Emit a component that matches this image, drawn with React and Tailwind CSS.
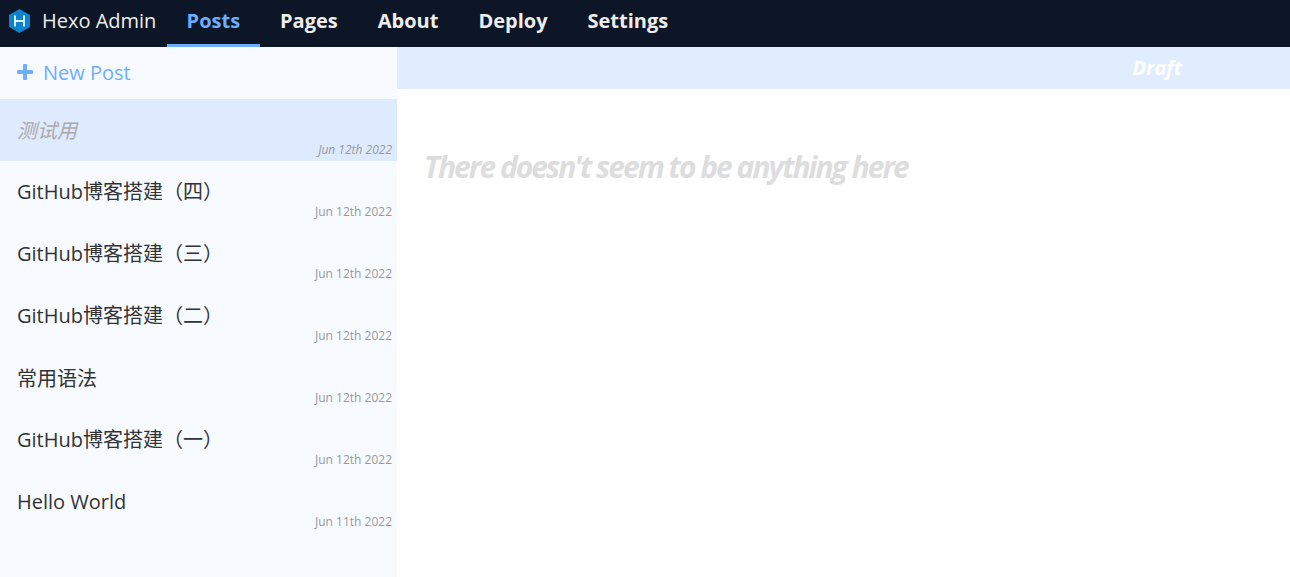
import React from 'react';

const tabs = ['Posts', 'Pages', 'About', 'Deploy', 'Settings'];

const posts = [
  { title: '测试用', date: 'Jun 12th 2022', draft: true },
  { title: 'GitHub博客搭建（四）', date: 'Jun 12th 2022' },
  { title: 'GitHub博客搭建（三）', date: 'Jun 12th 2022' },
  { title: 'GitHub博客搭建（二）', date: 'Jun 12th 2022' },
  { title: '常用语法', date: 'Jun 12th 2022' },
  { title: 'GitHub博客搭建（一）', date: 'Jun 12th 2022' },
  { title: 'Hello World', date: 'Jun 11th 2022' },
];

function Logo() {
  return (
    <svg className="-mt-px ml-[9px] mr-3 h-6 w-[21px] shrink-0" viewBox="0 0 21 24">
      <path d="M10.5 0 21 6v12l-10.5 6L0 18V6z" fill="#0e83cd" />
      <path d="M6 6.5v11M15 6.5v11M6 12h9" stroke="#e8f6ff" strokeWidth="1.8" fill="none" />
    </svg>
  );
}

function PlusIcon() {
  return (
    <svg className="-mt-0.5 mr-2.5 size-4" viewBox="0 0 16 16" fill="currentColor">
      <path d="M7 0h2a1 1 0 0 1 1 1v5h5a1 1 0 0 1 1 1v2a1 1 0 0 1-1 1h-5v5a1 1 0 0 1-1 1H7a1 1 0 0 1-1-1v-5H1a1 1 0 0 1-1-1V7a1 1 0 0 1 1-1h5V1a1 1 0 0 1 1-1z" />
    </svg>
  );
}

function Header() {
  return (
    <header className="flex h-[47px] bg-[#0d1626] text-xl text-[#eee]">
      <div className="flex h-[42px] w-[167px] items-center whitespace-nowrap">
        <Logo />
        <span>Hexo Admin</span>
      </div>
      <nav className="flex">
        {tabs.map((tab, i) => (
          <a
            key={tab}
            className={
              i === 0
                ? 'h-[47px] w-[93px] whitespace-nowrap border-b-3 border-[#6caeff] pl-[19.6px] font-bold leading-[42px] text-[#6caeff]'
                : 'h-[47px] px-5 font-bold leading-[42px]'
            }
          >
            {tab}
          </a>
        ))}
      </nav>
    </header>
  );
}

function PostRow({ post }) {
  const hasLatin = /[A-Za-z]/.test(post.title);
  return (
    <li
      className={
        post.draft
          ? 'flex h-[62px] flex-col bg-[#deebff] pl-[17px] pr-[5px] italic text-[#aaa]'
          : 'flex h-[62px] flex-col pl-[17px] pr-[5px] text-[#333]'
      }
    >
      <span
        className={
          hasLatin
            ? 'mt-[17px] h-[27px] text-xl leading-[27px]'
            : 'mt-[18px] h-[26px] text-xl leading-[27px]'
        }
      >
        {post.title}
      </span>
      <span className="-mt-px self-end text-xs leading-4 text-[#999]">{post.date}</span>
    </li>
  );
}

export default function App() {
  return (
    <div className="flex h-[577px] w-[1290px] flex-col overflow-hidden bg-white font-['Open_Sans','Noto_Sans_CJK_SC',sans-serif]">
      <Header />
      <div className="flex flex-1">
        <aside className="w-[397px] bg-[#f7faff]">
          <div className="flex h-[52px] items-center pl-[17px] text-xl text-[#6caeff]">
            <PlusIcon />
            <span>New Post</span>
          </div>
          <ul>
            {posts.map((post) => (
              <PostRow key={post.title} post={post} />
            ))}
          </ul>
        </aside>
        <main className="flex-1">
          <div className="flex h-[42px] justify-end bg-[#e0ecff] pr-[108px] text-xl font-bold italic leading-[42px] text-white">
            Draft
          </div>
          <h1 className="ml-[27px] mt-[57px] text-[30px] font-bold italic leading-[41px] tracking-[-2px] text-[#ddd]">
            There doesn't seem to be anything here
          </h1>
        </main>
      </div>
    </div>
  );
}
